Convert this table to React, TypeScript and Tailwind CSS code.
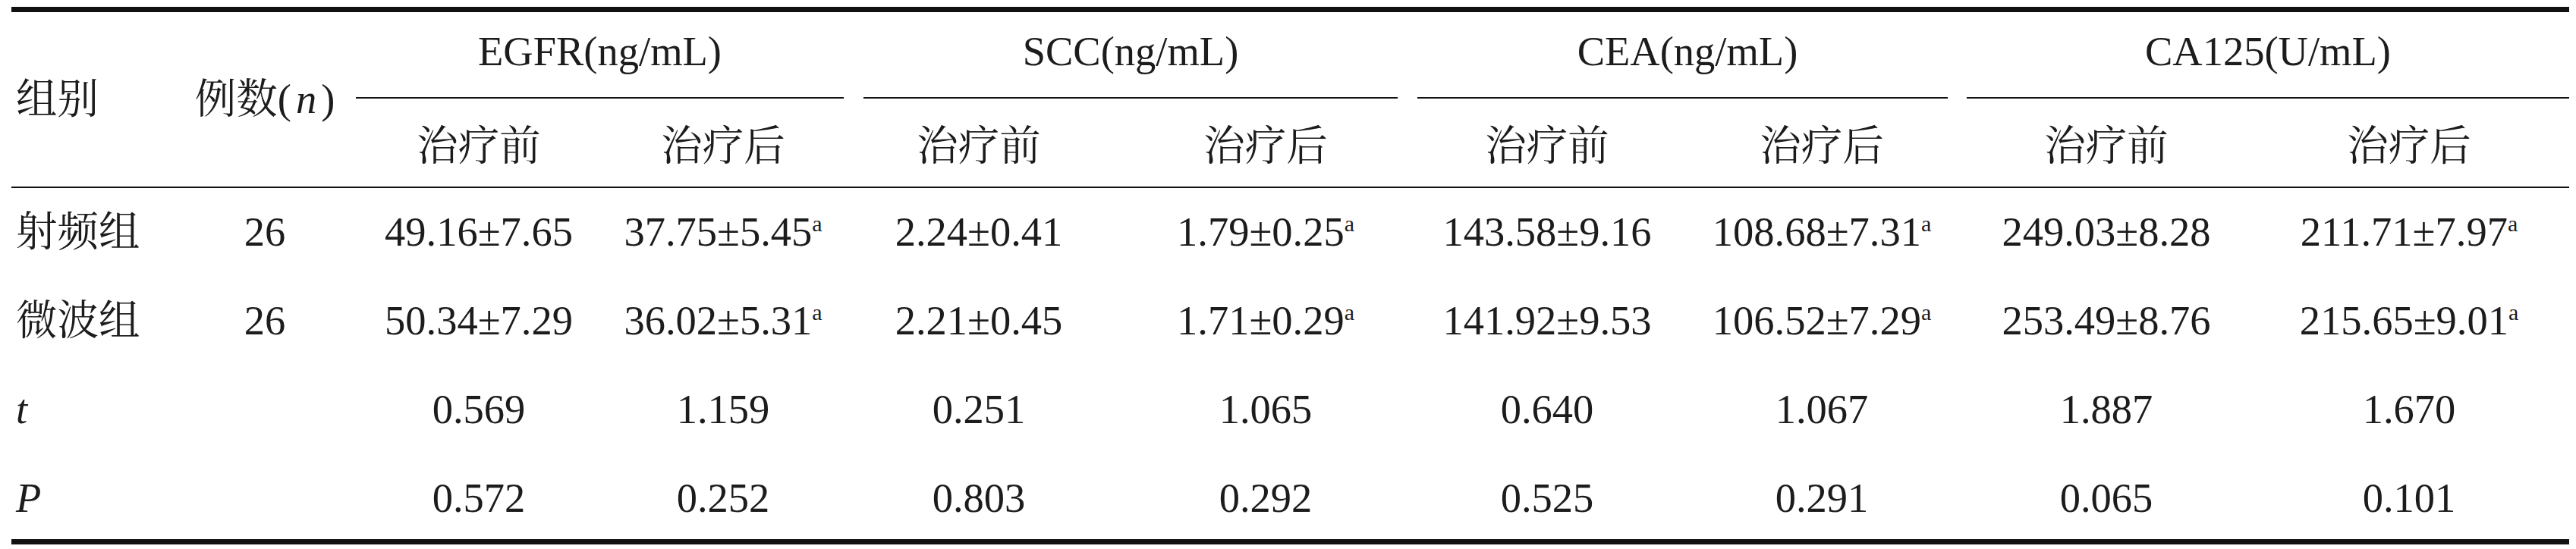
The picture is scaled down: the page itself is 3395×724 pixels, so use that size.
type Cell = { v: string; sup?: boolean };

const COLS =
  'grid grid-cols-[219px_230px_334px_310px_364px_392px_350px_374px_376px_422px]';

const GROUPS = [
  { title: 'EGFR(ng/mL)', line: 'ml-[5px] mr-[-4px]', text: '' },
  { title: 'SCC(ng/mL)', line: 'ml-[30px] mr-[22px]', text: '' },
  { title: 'CEA(ng/mL)', line: 'ml-[4px] mr-[21px]', text: 'pl-[13px]' },
  { title: 'CA125(U/mL)', line: 'ml-[4px] mr-0', text: '' },
];

const ROWS: { label: string; italic?: boolean; n: string; cells: Cell[] }[] = [
  {
    label: '射频组',
    n: '26',
    cells: [
      { v: '49.16±7.65' },
      { v: '37.75±5.45', sup: true },
      { v: '2.24±0.41' },
      { v: '1.79±0.25', sup: true },
      { v: '143.58±9.16' },
      { v: '108.68±7.31', sup: true },
      { v: '249.03±8.28' },
      { v: '211.71±7.97', sup: true },
    ],
  },
  {
    label: '微波组',
    n: '26',
    cells: [
      { v: '50.34±7.29' },
      { v: '36.02±5.31', sup: true },
      { v: '2.21±0.45' },
      { v: '1.71±0.29', sup: true },
      { v: '141.92±9.53' },
      { v: '106.52±7.29', sup: true },
      { v: '253.49±8.76' },
      { v: '215.65±9.01', sup: true },
    ],
  },
  {
    label: 't',
    italic: true,
    n: '',
    cells: [
      { v: '0.569' },
      { v: '1.159' },
      { v: '0.251' },
      { v: '1.065' },
      { v: '0.640' },
      { v: '1.067' },
      { v: '1.887' },
      { v: '1.670' },
    ],
  },
  {
    label: 'P',
    italic: true,
    n: '',
    cells: [
      { v: '0.572' },
      { v: '0.252' },
      { v: '0.803' },
      { v: '0.292' },
      { v: '0.525' },
      { v: '0.291' },
      { v: '0.065' },
      { v: '0.101' },
    ],
  },
];

function Value({ cell }: { cell: Cell }) {
  return (
    <span className="whitespace-nowrap">
      {cell.v}
      {cell.sup && <span className="text-[30px] leading-none align-[19px]">a</span>}
    </span>
  );
}

export default function App() {
  return (
    <div className="w-[3395px] h-[724px] bg-white pt-[9px] overflow-hidden">
      <div className="ml-[15px] w-[3371px] border-t-[7px] border-b-[7px] border-[#111] text-[#1c1c1c] text-[54.5px] leading-none font-['Liberation_Serif','Noto_Serif_CJK_SC','Noto_Sans_CJK_SC',serif]">
        {/* 表头 */}
        <div className={`${COLS} grid-rows-[114px_116px] border-b-2 border-[#111]`}>
          <div className="row-span-2 flex items-center pl-[6px]">组别</div>
          <div className="row-span-2 flex items-center justify-center">
            例数(<i className="mx-[6px]">n</i>)
          </div>
          {GROUPS.map((g) => (
            <div key={g.title} className="col-span-2 flex flex-col">
              <div className={`flex flex-1 ${g.line} items-center justify-center pb-[8px] ${g.text}`}>
                {g.title}
              </div>
              <div className={`h-[2px] bg-[#111] ${g.line}`} />
            </div>
          ))}
          {GROUPS.flatMap((g) => ['治疗前', '治疗后'].map((s) => (
            <div key={g.title + s} className="flex items-center justify-center pt-[10px]">
              {s}
            </div>
          )))}
        </div>

        {/* 数据行 */}
        {ROWS.map((r, i) => (
          <div
            key={r.label}
            className={`${COLS} ${i === ROWS.length - 1 ? 'h-[112px] pt-[5px]' : 'h-[117px]'}`}
          >
            <div className={`flex items-center pl-[6px] ${r.italic ? 'italic' : ''}`}>{r.label}</div>
            <div className="flex items-center justify-center">{r.n}</div>
            {r.cells.map((c, j) => (
              <div key={j} className="flex items-center justify-center">
                <Value cell={c} />
              </div>
            ))}
          </div>
        ))}
      </div>
    </div>
  );
}
